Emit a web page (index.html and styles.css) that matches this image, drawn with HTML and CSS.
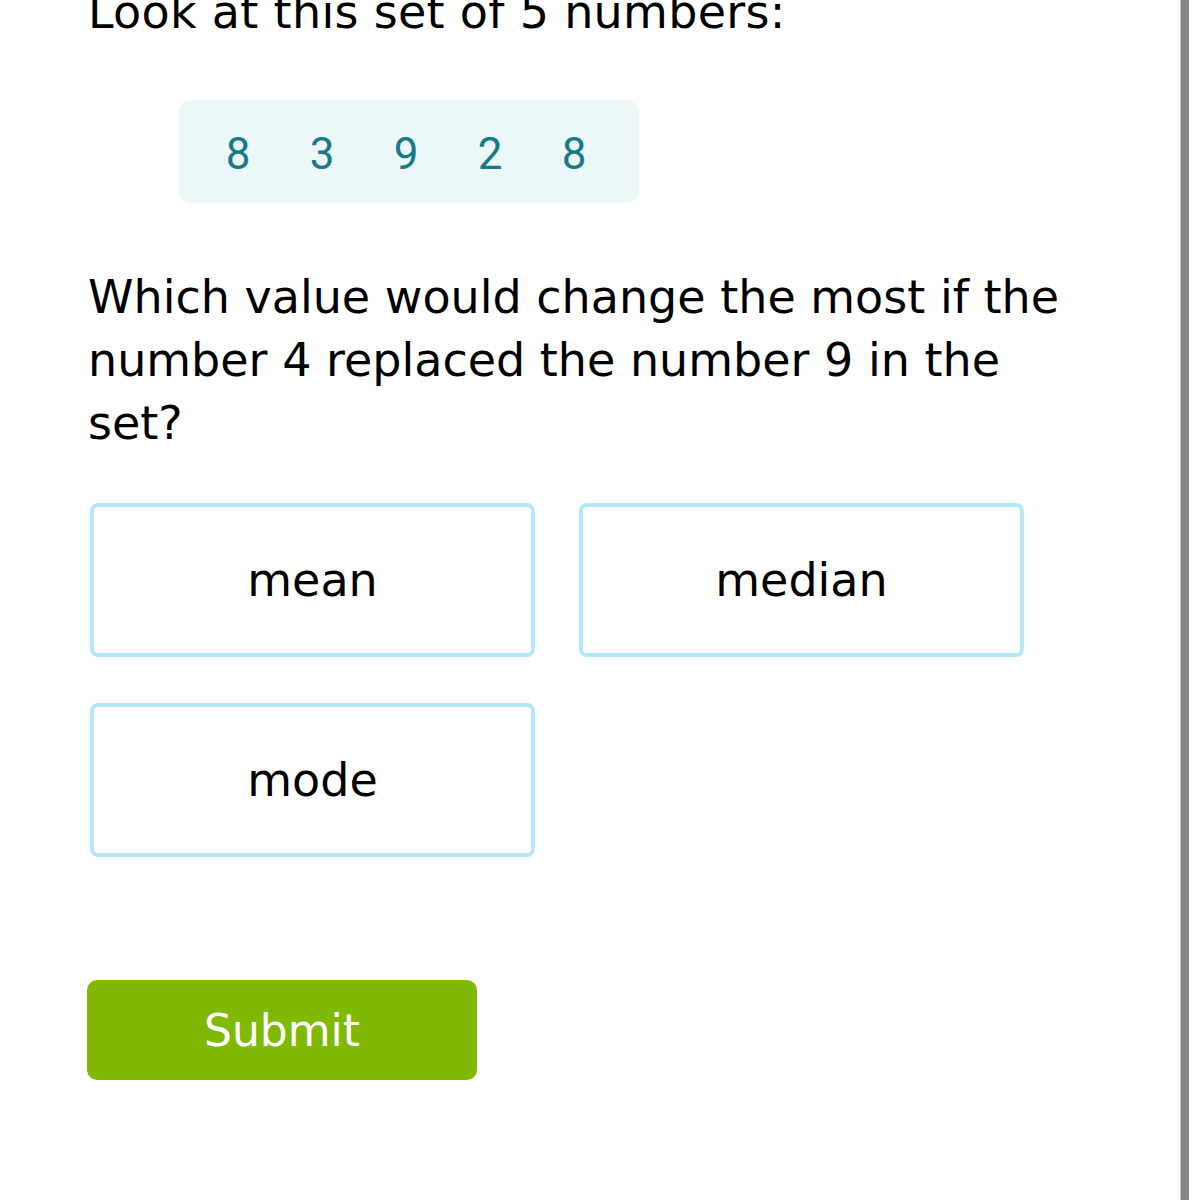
FILE: index.html
```html
<!DOCTYPE html>
<html>
<head>
<meta charset="utf-8">
<link rel="stylesheet" href="styles.css">
</head>
<body>
<div class="page">
  <main class="content">
    <p class="heading">Look at this set of 5 numbers:</p>
    <div class="numbers">
      <span class="num">8</span>
      <span class="num">3</span>
      <span class="num">9</span>
      <span class="num">2</span>
      <span class="num">8</span>
    </div>
    <p class="question">Which value would change the most if the number 4 replaced the number 9 in the set?</p>
    <div class="options">
      <div class="option">mean</div>
      <div class="option">median</div>
      <div class="option">mode</div>
    </div>
    <button class="submit">Submit</button>
  </main>
  <div class="scrollbar"></div>
</div>
</body>
</html>
```

FILE: styles.css
```css
html, body {
  margin: 0;
  padding: 0;
  background: #ffffff;
  overflow: hidden;
}
body {
  font-family: "DejaVu Sans", Verdana, sans-serif;
  color: #000;
}
.page {
  display: flex;
  width: 1199px;
  height: 1200px;
  overflow: hidden;
}
.content {
  flex: 1;
  padding-left: 88px;
}
.heading {
  margin: -19px 0 0 0;
  font-size: 46px;
  line-height: 63px;
  letter-spacing: 0.3px;
  white-space: nowrap;
}
.numbers {
  margin: 56px 0 0 91px;
  width: 443px;
  height: 103px;
  padding-left: 17px;
  background: #ebf7f9;
  border-radius: 12px;
  display: flex;
  align-items: center;
}
.num {
  width: 84px;
  padding-top: 4px;
  text-align: center;
  font-family: Roboto, "Noto Sans", sans-serif;
  font-size: 44px;
  color: #177a86;
}
.question {
  margin: 63px 0 0 0;
  width: 1000px;
  font-size: 46px;
  line-height: 63px;
}
.options {
  margin: 48px 0 0 2px;
  display: grid;
  grid-template-columns: 445px 445px;
  column-gap: 44px;
  row-gap: 46px;
}
.option {
  box-sizing: border-box;
  height: 154px;
  border: 4px solid #b4e8f8;
  border-radius: 8px;
  display: flex;
  align-items: center;
  justify-content: center;
  font-size: 46px;
}
.submit {
  margin: 123px 0 0 -1px;
  width: 390px;
  height: 100px;
  border: none;
  border-radius: 10px;
  background: #80b905;
  color: #ffffff;
  font-family: "DejaVu Sans", Verdana, sans-serif;
  font-size: 44px;
  display: block;
}
.scrollbar {
  width: 8px;
  height: 1200px;
  margin-right: 10px;
  background: #858585;
  border-left: 1px solid #c9c9c9;
}
```
